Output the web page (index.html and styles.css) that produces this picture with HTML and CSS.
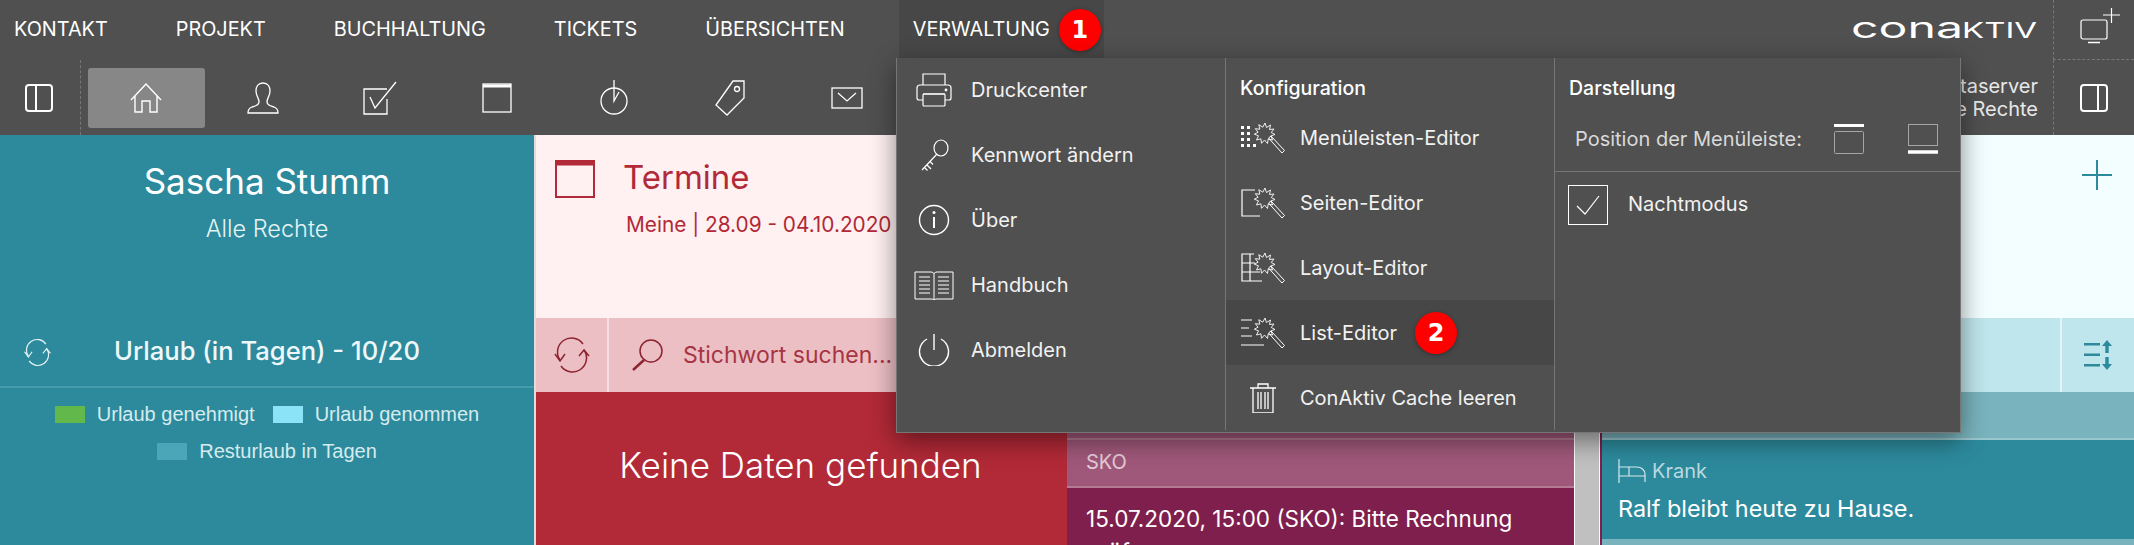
FILE: index.html
```html
<!DOCTYPE html>
<html lang="de">
<head>
    <meta charset="UTF-8">
    <title>ConAktiv</title>
    <link rel="stylesheet" href="styles.css">
</head>
<body>
    <svg class="defs" width="0" height="0">
        <symbol id="wand" viewBox="0 0 44 30">
            <path d="M24 0l1.500 4.500 4-2.500-1 4.500 4.500-.5-2.800 3.500 3.800 2-4.300 1.500 2 4-4.500-1-.7 4.500-3-3.500-3 3.300-.6-4.500-4.400 1.200 2-4.200-4.200-1.600 3.800-2-2.800-3.500 4.500.5-1-4.500 4 2.500z" fill="none" stroke="#fff" stroke-width=".9"/>
            <path d="M27.500 15l2.500-2 13.500 14.500-2.500 2.500z" fill="none" stroke="#fff" stroke-width="1"/>
        </symbol>
        <symbol id="sync" viewBox="0 0 38 38">
            <path d="M7 24A14 14 0 0 1 30 8M31 14A14 14 0 0 1 8 30" fill="none" stroke="currentColor" stroke-width="1.500"/>
            <path d="M2 18l5 7 5-7M26 20l5-6 5 6" fill="none" stroke="currentColor" stroke-width="1.500"/>
        </symbol>
    </svg>

    <header class="topbar">
        <nav class="main-nav">
            <a class="nav-item">KONTAKT</a>
            <a class="nav-item">PROJEKT</a>
            <a class="nav-item">BUCHHALTUNG</a>
            <a class="nav-item">TICKETS</a>
            <a class="nav-item">ÜBERSICHTEN</a>
            <a class="nav-item nav-open">VERWALTUNG<span class="badge badge-nav">1</span></a>
        </nav>
        <svg class="logo" width="190" height="40" viewBox="0 0 190 40">
            <text class="logo-low" x="3" y="28" textLength="112" lengthAdjust="spacingAndGlyphs">cona</text>
            <text class="logo-cap" x="114" y="28" textLength="75" lengthAdjust="spacingAndGlyphs">KTIV</text>
        </svg>
        <div class="corner-cell">
            <svg width="40" height="44" viewBox="0 0 40 44" fill="none" stroke="#fff" stroke-width="1.200">
                <rect x="1" y="12" width="26" height="19" rx="2"/>
                <path d="M8 34.500h12" stroke-width="1.500"/>
                <path d="M23 7h17M31.500 0v15"/>
            </svg>
        </div>
    </header>

    <div class="toolbar">
        <div class="side-toggle">
            <svg width="28" height="28" viewBox="0 0 28 28" fill="none" stroke="#fff" stroke-width="2"><rect x="1" y="1" width="26" height="26" rx="3"/><path d="M11 1v26"/></svg>
        </div>
        <div class="tool-list">
            <div class="tool tool-active">
                <svg width="32" height="30" viewBox="0 0 32 30" fill="none" stroke="#fff" stroke-width="1.400"><path d="M1 17L16 1l15 16M5 13v16h7V18h8v11h7V13"/></svg>
            </div>
            <div class="tool">
                <svg width="32" height="32" viewBox="0 0 32 32" fill="none" stroke="#fff" stroke-width="1.300"><path d="M16 1c-5 0-7 4-7 8 0 5 3 7 3 11 0 3-3 4-7 5-3 1-4 3-4 6h30c0-3-1-5-4-6-4-1-7-2-7-5 0-4 3-6 3-11 0-4-2-8-7-8z"/></svg>
            </div>
            <div class="tool">
                <svg width="34" height="34" viewBox="0 0 34 34" fill="none" stroke="#fff" stroke-width="1.300"><path d="M24 8H1v25h23V18M7 16l5 11L33 1" /></svg>
            </div>
            <div class="tool">
                <svg width="30" height="30" viewBox="0 0 30 30" fill="none" stroke="#fff" stroke-width="1.300"><rect x="1" y="1" width="28" height="28"/><path d="M1 3h28" stroke-width="3"/></svg>
            </div>
            <div class="tool">
                <svg width="28" height="36" viewBox="0 0 28 36" fill="none" stroke="#fff" stroke-width="1.300"><circle cx="14" cy="21" r="13"/><path d="M14 0v21l5-9"/></svg>
            </div>
            <div class="tool">
                <svg width="30" height="36" viewBox="0 0 30 36" fill="none" stroke="#fff" stroke-width="1.300"><path d="M18 1h11v17L12 35 1 25z"/><circle cx="22" cy="9" r="2.500"/></svg>
            </div>
            <div class="tool">
                <svg width="32" height="22" viewBox="0 0 32 22" fill="none" stroke="#fff" stroke-width="1.300"><rect x="1" y="1" width="30" height="20"/><path d="M7 6l9 8 9-8"/></svg>
            </div>
        </div>
        <div class="server-info">
            <div>Dataserver</div>
            <div>Alle Rechte</div>
        </div>
        <div class="side-toggle side-toggle-right">
            <svg width="28" height="28" viewBox="0 0 28 28" fill="none" stroke="#fff" stroke-width="2"><rect x="1" y="1" width="26" height="26" rx="3"/><path d="M18 1v26"/></svg>
        </div>
    </div>

    <main class="panels">
        <section class="panel panel-user">
            <div class="user-head">
                <h1>Sascha Stumm</h1>
                <p>Alle Rechte</p>
            </div>
            <div class="holiday-row">
                <svg class="holiday-sync" width="29" height="29"><use href="#sync"/></svg>
                <span>Urlaub (in Tagen) - 10/20</span>
            </div>
            <div class="legend">
                <div class="legend-line">
                    <span class="legend-item"><i class="swatch swatch-green"></i>Urlaub genehmigt</span>
                    <span class="legend-item"><i class="swatch swatch-cyan"></i>Urlaub genommen</span>
                </div>
                <div class="legend-line">
                    <span class="legend-item"><i class="swatch swatch-teal"></i>Resturlaub in Tagen</span>
                </div>
            </div>
        </section>

        <section class="panel panel-dates">
            <div class="panel-head">
                <svg width="40" height="38" viewBox="0 0 40 38" fill="none" stroke="#b22937" stroke-width="2"><rect x="1" y="1" width="38" height="36"/><path d="M1 3.500h38" stroke-width="4"/></svg>
                <div class="head-text">
                    <h2>Termine</h2>
                    <p>Meine | 28.09 - 04.10.2020</p>
                </div>
            </div>
            <div class="search-bar">
                <div class="search-sync">
                    <svg width="38" height="38"><use href="#sync"/></svg>
                </div>
                <div class="search-field">
                    <svg width="32" height="32" viewBox="0 0 32 32" fill="none" stroke="#8e2330" stroke-width="1.500"><circle cx="20" cy="12" r="11"/><path d="M13 21L2 31" stroke-width="2.500"/></svg>
                    <span>Stichwort suchen...</span>
                </div>
            </div>
            <div class="no-data">Keine Daten gefunden</div>
        </section>

        <section class="panel panel-notes">
            <div class="notes-strip"></div>
            <div class="notes-group">SKO</div>
            <div class="notes-item">15.07.2020, 15:00 (SKO): Bitte Rechnung prüfen</div>
        </section>

        <div class="scroll-track"></div>

        <section class="panel panel-absence">
            <div class="absence-head">
                <svg width="30" height="30" viewBox="0 0 30 30" fill="none" stroke="#2c8a9c" stroke-width="2"><path d="M0 15h30M15 0v30"/></svg>
            </div>
            <div class="absence-bar">
                <div class="sort-cell">
                    <svg width="28" height="30" viewBox="0 0 28 30" fill="#2c8a9c"><path d="M0 3h16v2.500H0zM0 13.500h16V16H0zM0 24h16v2.500H0zM23 0l5 6h-3.300v7h-3.400V6H18zM21.300 17h3.400v7H28l-5 6-5-6h3.300z"/></svg>
                </div>
            </div>
            <div class="absence-strip"></div>
            <div class="absence-item">
                <div class="absence-type">
                    <svg width="28" height="24" viewBox="0 0 28 24" fill="none" stroke="#d7e9ec" stroke-width="1.200"><path d="M1 0v24M1 8h18c4 0 8 3 8 7v8M1 17h26M11 8v9"/></svg>
                    <span>Krank</span>
                </div>
                <p>Ralf bleibt heute zu Hause.</p>
            </div>
        </section>
    </main>

    <div class="dropdown">
        <div class="drop-col drop-col-first">
            <a class="drop-row">
                <span class="drop-icon">
                    <svg width="36" height="34" viewBox="0 0 36 34" fill="none" stroke="#fff" stroke-width="1.200"><path d="M7 12V1h22v11M7 27H3c-1.500 0-2-1-2-2V15c0-2 1-3 3-3h28c2 0 3 1 3 3v10c0 1-.5 2-2 2h-4"/><rect x="7" y="21" width="22" height="12" rx="1"/><path d="M7 21h22"/><circle cx="30" cy="17" r=".8"/></svg>
                </span>Druckcenter
            </a>
            <a class="drop-row">
                <span class="drop-icon">
                    <svg width="32" height="32" viewBox="0 0 32 32" fill="none" stroke="#fff" stroke-width="1.200"><ellipse cx="23" cy="9" rx="7" ry="8"/><path d="M19 15L4 31M9 26l4 4M6.500 28.500l3 3M12 22.500l3 3"/></svg>
                </span>Kennwort ändern
            </a>
            <a class="drop-row">
                <span class="drop-icon">
                    <svg width="32" height="32" viewBox="0 0 32 32" fill="none" stroke="#fff" stroke-width="1.400"><circle cx="16" cy="16" r="14.500"/><path d="M16 13v11" stroke-width="2"/><circle cx="16" cy="8.500" r="1.500" fill="#fff" stroke="none"/></svg>
                </span>Über
            </a>
            <a class="drop-row">
                <span class="drop-icon">
                    <svg width="40" height="30" viewBox="0 0 40 30" fill="none" stroke="#fff" stroke-width="1"><path d="M1 2h16c1.500 0 3 1 3 2 0-1 1.500-2 3-2h16v27H23c-1.500 0-3 .5-3 1 0-.5-1.500-1-3-1H1z"/><path d="M20 4v26M5 7h11M5 11h11M5 15h11M5 19h11M5 23h11M24 7h11M24 11h11M24 15h11M24 19h11M24 23h11"/></svg>
                </span>Handbuch
            </a>
            <a class="drop-row">
                <span class="drop-icon">
                    <svg width="32" height="32" viewBox="0 0 32 32" fill="none" stroke="#fff" stroke-width="1.400"><path d="M9 5a14.500 14.500 0 1 0 14 0M16 0v16"/></svg>
                </span>Abmelden
            </a>
        </div>

        <div class="drop-col drop-col-config">
            <h3 class="drop-title">Konfiguration</h3>
            <a class="drop-row">
                <span class="drop-icon">
                    <svg width="44" height="30" viewBox="0 0 44 30">
                        <path d="M0 3h3v3H0zM6 3h3v3H6zM0 9h3v3H0zM6 9h3v3H6zM0 15h3v3H0zM6 15h3v3H6zM0 21h3v3H0zM6 21h3v3H6zM12 21h3v3h-3z" fill="#fff"/>
                        <use href="#wand" width="44" height="30"/>
                    </svg>
                </span>Menüleisten-Editor
            </a>
            <a class="drop-row">
                <span class="drop-icon">
                    <svg width="44" height="30" viewBox="0 0 44 30">
                        <path d="M14 2H1v26h18" fill="none" stroke="#fff" stroke-width="1.200"/>
                        <use href="#wand" width="44" height="30"/>
                    </svg>
                </span>Seiten-Editor
            </a>
            <a class="drop-row">
                <span class="drop-icon">
                    <svg width="44" height="30" viewBox="0 0 44 30">
                        <path d="M13 1H1v27h20M1 10h13M1 19h18M9 1v27" fill="none" stroke="#fff" stroke-width="1.200"/>
                        <use href="#wand" width="44" height="30"/>
                    </svg>
                </span>Layout-Editor
            </a>
            <a class="drop-row drop-row-hover">
                <span class="drop-icon">
                    <svg width="44" height="30" viewBox="0 0 44 30">
                        <path d="M0 2h11M0 10h8M0 18h11M0 27h23" fill="none" stroke="#fff" stroke-width="1.200"/>
                        <use href="#wand" width="44" height="30"/>
                    </svg>
                </span>List-Editor<span class="badge badge-row">2</span>
            </a>
            <a class="drop-row">
                <span class="drop-icon">
                    <svg width="26" height="30" viewBox="0 0 26 30" fill="none" stroke="#fff" stroke-width="1.300"><path d="M0 5h26M8 5V1h10v4M3 5v25h20V5M8 9v17M11 9v17M15 9v17M18 9v17"/></svg>
                </span>ConAktiv Cache leeren
            </a>
        </div>

        <div class="drop-col drop-col-view">
            <h3 class="drop-title">Darstellung</h3>
            <div class="menu-position">
                <span>Position der Menüleiste:</span>
                <div class="position-icons">
                    <svg width="30" height="30" viewBox="0 0 30 30" fill="none" stroke="#a5a5a5"><path d="M0 1.500h30" stroke="#fff" stroke-width="3"/><rect x=".5" y="7.500" width="29" height="22" rx="1"/></svg>
                    <svg width="30" height="30" viewBox="0 0 30 30" fill="none" stroke="#a5a5a5"><path d="M0 28h30" stroke="#fff" stroke-width="3.500"/><rect x=".5" y=".5" width="29" height="21"/></svg>
                </div>
            </div>
            <div class="night-mode">
                <span class="check-box">
                    <svg width="24" height="22" viewBox="0 0 24 22" fill="none" stroke="#fff" stroke-width="1.200"><path d="M1 12l8 8L23 2"/></svg>
                </span>
                <span class="night-label">Nachtmodus</span>
            </div>
        </div>
    </div>
</body>
</html>
```

FILE: styles.css
```css
* {
    box-sizing: border-box;
}
html, body {
    height: 100%;
}
body {
    margin: 0;
    font-family: Inter, "Noto Sans", sans-serif;
    background-color: #505050;
    color: #fff;
    overflow: hidden;
}
h1, h2, h3, p {
    margin: 0;
    font-weight: 400;
}
.defs {
    position: absolute;
}

/* top navigation */
.topbar {
    display: flex;
    align-items: center;
    height: 60px;
}
.main-nav {
    display: flex;
    gap: 40px;
    height: 58px;
    align-self: flex-start;
}
.nav-item {
    display: flex;
    align-items: center;
    padding: 0 14px;
    font-size: 19.850px;
    font-weight: 400;
    position: relative;
}
.nav-open {
    background-color: #474747;
    padding-right: 54px;
}
.badge {
    display: flex;
    align-items: center;
    justify-content: center;
    width: 42px;
    height: 42px;
    border-radius: 50%;
    background-color: #f00;
    color: #fff;
    font-family: "DejaVu Sans", sans-serif;
    font-weight: 700;
    font-size: 24px;
    box-shadow: 0 1px 4px rgba(0, 0, 0, 0.35);
}
.badge-nav {
    position: absolute;
    right: 3px;
    top: 9px;
}
.badge-row {
    margin-left: 18px;
}
.logo {
    margin-left: auto;
    margin-right: 15px;
}
.logo text {
    font-family: Inter, sans-serif;
    font-weight: 400;
    fill: #fff;
}
.logo-low {
    font-size: 29px;
}
.logo-cap {
    font-size: 22px;
}
.corner-cell {
    display: flex;
    align-items: center;
    width: 81px;
    height: 60px;
    border-left: 1px dashed #777;
    border-bottom: 1px dashed #777;
    padding-left: 26px;
}

/* icon toolbar */
.toolbar {
    display: flex;
    height: 75px;
}
.side-toggle {
    display: flex;
    align-items: center;
    justify-content: center;
    width: 81px;
    padding-right: 2px;
    border-right: 1px dashed #777;
}
.side-toggle-right {
    border-right: none;
    border-left: 1px dashed #777;
    padding: 0;
}
.tool-list {
    display: flex;
    padding: 8px 0 7px 7px;
}
.tool {
    display: flex;
    align-items: center;
    justify-content: center;
    width: 116.800px;
    border-radius: 3px;
}
.tool-active {
    background-color: #878787;
}
.server-info {
    margin-left: auto;
    padding-right: 15px;
    align-self: center;
    text-align: right;
    font-size: 20px;
    line-height: 23px;
    color: #e8e8e8;
}

/* panels */
.panels {
    display: flex;
    height: 410px;
}
.panel {
    display: flex;
    flex-direction: column;
    overflow: hidden;
}
.panel-user {
    width: 534px;
    background-color: #2c8a9c;
}
.user-head {
    height: 183px;
    padding-top: 26px;
    text-align: center;
}
.user-head h1 {
    font-size: 35px;
    line-height: 40px;
}
.user-head p {
    margin-top: 14px;
    font-size: 23.500px;
    line-height: 28px;
    font-weight: 300;
    color: #e6f3f5;
}
.holiday-row {
    position: relative;
    height: 70px;
    display: flex;
    align-items: center;
    justify-content: center;
    border-bottom: 2px solid #479cac;
    font-size: 25.600px;
    font-weight: 500;
    color: #eef8fa;
    padding-bottom: 4px;
}
.holiday-sync {
    position: absolute;
    left: 23px;
    top: 20px;
    color: #e6f3f5;
}
.legend {
    padding-top: 8px;
    font-family: "Liberation Sans", Arial, sans-serif;
    font-size: 20px;
    color: #d7eaee;
}
.legend-line {
    display: flex;
    justify-content: center;
    gap: 18px;
    height: 37px;
    align-items: center;
}
.legend-item {
    display: flex;
    align-items: center;
}
.swatch {
    width: 30px;
    height: 17px;
    margin-right: 12px;
}
.swatch-green {
    background-color: #63b84c;
}
.swatch-cyan {
    background-color: #8ae3f6;
}
.swatch-teal {
    background-color: #4ba6b8;
}

.panel-dates {
    width: 533px;
    background-color: #fff1f1;
    border-left: 2px solid #e4dcdc;
}
.panel-head {
    height: 183px;
    display: flex;
    align-items: flex-start;
    padding: 25px 0 0 19px;
    color: #b22937;
}
.head-text {
    margin-left: 28px;
    margin-top: -3px;
}
.head-text h2 {
    font-size: 33px;
    line-height: 40px;
}
.head-text p {
    margin-top: 15px;
    margin-left: 3px;
    font-size: 20.800px;
    line-height: 26px;
}
.search-bar {
    display: flex;
    height: 74px;
    background-color: #ecbfc4;
    color: #8e2330;
}
.search-sync {
    display: flex;
    align-items: center;
    justify-content: center;
    width: 73px;
    border-right: 2px solid #f5dfe2;
}
.search-field {
    display: flex;
    align-items: center;
    gap: 20px;
    padding-left: 22px;
    font-size: 23px;
    color: #a63543;
}
.no-data {
    flex: 1;
    background-color: #b22937;
    text-align: center;
    padding-top: 52px;
    font-size: 35px;
    font-weight: 300;
    margin-left: -2px;
}

.panel-notes {
    width: 508px;
    background-color: #7f1f4d;
    border-right: 1px solid #fff;
}
.notes-strip {
    height: 305px;
    flex: none;
    background-color: #a0587a;
    border-bottom: 2px solid #b57a94;
}
.notes-group {
    height: 48px;
    flex: none;
    background-color: #a0587a;
    border-bottom: 2px solid #b57a94;
    padding: 9px 0 0 19px;
    font-size: 20px;
    line-height: 26px;
    color: #e4ccd8;
}
.notes-item {
    flex: none;
    padding: 14px 19px 0;
    font-size: 22.500px;
    line-height: 33px;
}
.scroll-track {
    width: 25px;
    background-color: #c0c0c0;
    border-right: 1px solid #fff;
}
.panel-absence {
    flex: 1;
    border-left: 2px solid #7f1f4d;
    background-color: #79b3bd;
}
.absence-head {
    height: 183px;
    background-color: #f2feff;
    display: flex;
    justify-content: flex-end;
    padding: 25px 22px 0 0;
}
.absence-bar {
    height: 74px;
    background-color: #bfe6ec;
    display: flex;
    justify-content: flex-end;
}
.sort-cell {
    display: flex;
    align-items: center;
    justify-content: center;
    width: 74px;
    border-left: 2px solid #e3f4f6;
}
.absence-strip {
    height: 48px;
    border-bottom: 2px solid #9ac8d0;
}
.absence-item {
    height: 99px;
    background-color: #2c8a9c;
    padding: 19px 16px 0;
}
.absence-type {
    display: flex;
    align-items: center;
    gap: 6px;
    font-size: 20px;
    line-height: 22px;
    color: #b9d9df;
}
.absence-item p {
    margin-top: 11px;
    font-size: 23.400px;
    line-height: 30px;
}

/* Verwaltung dropdown */
.dropdown {
    position: absolute;
    left: 896px;
    top: 58px;
    width: 1065px;
    height: 375px;
    display: flex;
    background-color: #505050;
    border: 1px solid #767676;
    border-top: none;
    box-shadow: 0 8px 24px rgba(0, 0, 0, 0.45);
    padding-bottom: 2px;
    font-size: 20px;
}
.drop-col {
    display: flex;
    flex-direction: column;
    width: 329px;
    border-right: 1px solid #767676;
}
.drop-col-first .drop-row:first-child {
    margin-top: -1px;
}
.drop-col-view {
    flex: 1;
    border-right: none;
}
.drop-title {
    height: 48px;
    padding: 17px 0 0 14px;
    font-size: 19.500px;
    line-height: 26px;
    font-weight: 500;
}
.drop-row {
    display: flex;
    align-items: center;
    height: 65px;
    flex: none;
    padding-left: 17px;
    color: #f2f2f2;
}
.drop-col-config .drop-row {
    padding-left: 15px;
}
.drop-row-hover {
    background-color: #474747;
}
.drop-icon {
    display: flex;
    justify-content: center;
    width: 40px;
    margin-right: 17px;
}
.drop-col-config .drop-icon {
    width: 44px;
    margin-right: 15px;
}
.menu-position {
    display: flex;
    align-items: center;
    height: 66px;
    padding: 0 22px 0 20px;
    border-bottom: 1px solid #767676;
    color: #d9d9d9;
}
.position-icons {
    display: flex;
    gap: 44px;
    margin-left: auto;
}
.night-mode {
    display: flex;
    align-items: center;
    gap: 20px;
    padding: 13px 0 0 13px;
    color: #f2f2f2;
}
.night-label {
    padding-bottom: 2px;
}
.check-box {
    display: flex;
    align-items: center;
    justify-content: center;
    width: 40px;
    height: 40px;
    border: 1px solid #fff;
}
```
